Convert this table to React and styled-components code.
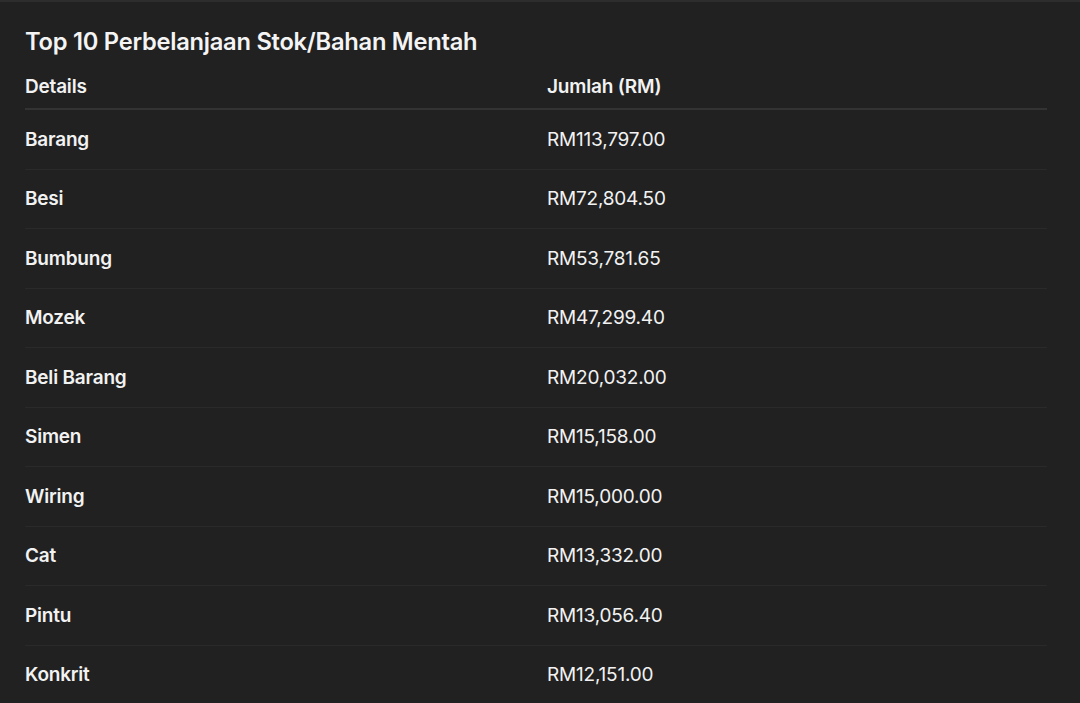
import styled, { createGlobalStyle } from "styled-components";

const Global = createGlobalStyle`
  html, body {
    margin: 0;
    padding: 0;
    background: #212121;
  }
  body {
    font-family: Inter, "Liberation Sans", sans-serif;
    color: #f2f2f2;
    -webkit-font-smoothing: antialiased;
  }
`;

const Panel = styled.section`
  height: 703px;
  box-sizing: border-box;
  border-top: 2px solid #2d2d2d;
  background: #212121;
  padding: 0 33px 0 25px;
  overflow: hidden;
`;

const Title = styled.h2`
  margin: 0 0 9px;
  padding-top: 26px;
  font-size: 23.7px;
  font-weight: 600;
  letter-spacing: -0.25px;
  line-height: 28px;
  color: #f4f4f4;
`;

const Row = styled.div`
  display: grid;
  grid-template-columns: 522px 1fr;
  align-items: center;
  height: ${(p) => (p.$head ? "45px" : "59.5px")};
  border-bottom: ${(p) => (p.$head ? "2px solid #333" : "1px solid #2a2a2a")};
  box-sizing: border-box;
`;

const Cell = styled.div`
  font-size: 19px;
  font-weight: ${(p) => (p.$bold ? 600 : 400)};
  letter-spacing: -0.2px;
  color: #f2f2f2;
`;

const rows = [
  ["Barang", "RM113,797.00"],
  ["Besi", "RM72,804.50"],
  ["Bumbung", "RM53,781.65"],
  ["Mozek", "RM47,299.40"],
  ["Beli Barang", "RM20,032.00"],
  ["Simen", "RM15,158.00"],
  ["Wiring", "RM15,000.00"],
  ["Cat", "RM13,332.00"],
  ["Pintu", "RM13,056.40"],
  ["Konkrit", "RM12,151.00"],
];

export default function App() {
  return (
    <>
      <Global />
      <Panel>
        <Title>Top 10 Perbelanjaan Stok/Bahan Mentah</Title>
        <Row $head>
          <Cell $bold>Details</Cell>
          <Cell $bold>Jumlah (RM)</Cell>
        </Row>
        {rows.map(([name, amount]) => (
          <Row key={name}>
            <Cell $bold>{name}</Cell>
            <Cell>{amount}</Cell>
          </Row>
        ))}
      </Panel>
    </>
  );
}
